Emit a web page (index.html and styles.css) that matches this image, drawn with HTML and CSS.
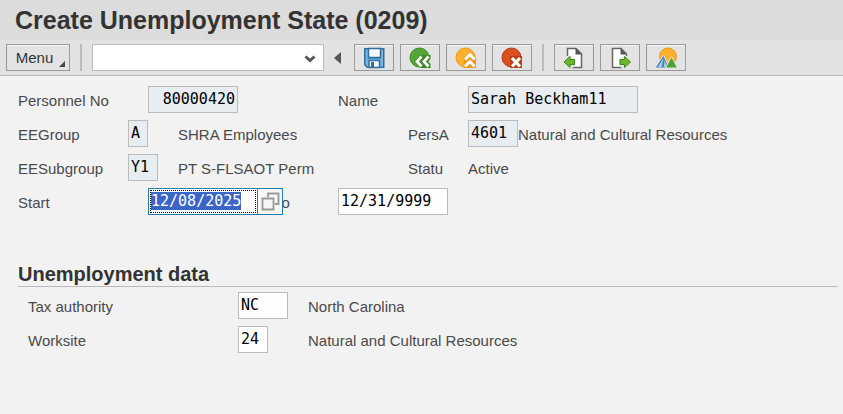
FILE: index.html
```html
<!DOCTYPE html>
<html lang="en">
<head>
	<meta charset="UTF-8">
	<title>Create Unemployment State (0209)</title>
	<link rel="stylesheet" href="styles.css">
	<script src="main.js" defer></script>
</head>
<body>
	<header class="titlebar">
		<h1>Create Unemployment State (0209)</h1>
	</header>
	<div class="toolbar">
		<button type="button" class="btn menu">Menu<span class="corner"></span></button>
		<span class="sep"></span>
		<div class="command">
			<select aria-label="Command"><option></option></select>
			<svg viewBox="0 0 12 8" width="12" height="8"><path d="M1.500 1.500L6 5.500L10.500 1.500" fill="none" stroke="#555" stroke-width="3"/></svg>
		</div>
		<button type="button" class="collapse" aria-label="Hide command field">
			<svg viewBox="0 0 7 12" width="7" height="12"><path d="M7 0V12L0 6z" fill="#555"/></svg>
		</button>
		<div class="group">
			<button type="button" class="btn icon" aria-label="Save">
				<svg viewBox="0 0 22 22" width="22" height="22">
					<path d="M1 1H21.500V21H4L1 18z" fill="#2e6f9f"/>
					<path d="M2.500 2.500H5V11.500H18V2.500H20V19.500H4.500L2.500 17.500z" fill="#7db3dc"/>
					<path d="M5.500 1.500H17.500V10.500H5.500z" fill="#f4f8fb" stroke="#2e6f9f" stroke-width="1.500"/>
					<path d="M6 13.500H16.500V20.500H6z" fill="#f4f8fb" stroke="#2e6f9f" stroke-width="1.500"/>
					<path d="M8 15H11V20H8z" fill="#2e6f9f"/>
				</svg>
			</button>
			<button type="button" class="btn icon" aria-label="Back">
				<svg viewBox="0 0 22 22" width="22" height="22">
					<circle cx="10.500" cy="10.500" r="9.500" fill="#55a636" stroke="#3d8a24"/>
					<path d="M11 8H21.500V12L19 14.500L21.500 17V21H11L5 14.500z" fill="#3d8a24"/>
					<path d="M12.500 9.500L8 14.500L12.500 19.500M19.500 9.500L15 14.500L19.500 19.500" fill="none" stroke="#fff" stroke-width="2.800"/>
				</svg>
			</button>
			<button type="button" class="btn icon" aria-label="Exit">
				<svg viewBox="0 0 22 22" width="22" height="22">
					<circle cx="10.500" cy="10.500" r="9.500" fill="#fdb02c" stroke="#f09a1c"/>
					<path d="M8.500 11L14.500 5L21 11V21H8.500z" fill="#f09a1c"/>
					<path d="M10 12.500L14.800 7.500L19.600 12.500M10 19.500L14.800 14.500L19.600 19.500" fill="none" stroke="#fff" stroke-width="2.800"/>
				</svg>
			</button>
			<button type="button" class="btn icon" aria-label="Cancel">
				<svg viewBox="0 0 22 22" width="22" height="22">
					<circle cx="10.500" cy="10.500" r="9.500" fill="#d9501f" stroke="#bd3c14"/>
					<path d="M9 9H21V21H9z" fill="#bd3c14"/>
					<path d="M11 11L19 19.500M19 11L11 19.500" stroke="#fff" stroke-width="3.200"/>
				</svg>
			</button>
		</div>
		<span class="sep"></span>
		<div class="group">
			<button type="button" class="btn icon" aria-label="Previous record">
				<svg viewBox="0 0 22 22" width="22" height="22">
					<path d="M4.500 1.500H13L18.500 7V20.500H4.500z" fill="#fff" stroke="#666" stroke-width="1.500"/>
					<path d="M12.500 1V7.500H19z" fill="#555"/>
					<path d="M0 9H7L12.500 12V18.500L8 22H0z" fill="#e3e3e3"/>
					<path d="M1 15L7 9.500V12.500H11.500V17.500H7V20.500z" fill="#6cb52d" stroke="#3f8a1c"/>
				</svg>
			</button>
			<button type="button" class="btn icon" aria-label="Next record">
				<svg viewBox="0 0 22 22" width="22" height="22">
					<path d="M3.500 1.500H12L17.500 7V20.500H3.500z" fill="#fff" stroke="#666" stroke-width="1.500"/>
					<path d="M11.500 1V7.500H18z" fill="#555"/>
					<path d="M22 9H15L10 12V18.500L14 22H22z" fill="#e3e3e3"/>
					<path d="M21.500 15L15.500 9.500V12.500H11V17.500H15.500V20.500z" fill="#6cb52d" stroke="#3f8a1c"/>
				</svg>
			</button>
			<button type="button" class="btn icon" aria-label="Overview">
				<svg viewBox="0 0 22 22" width="22" height="22">
					<circle cx="13" cy="9.500" r="8.500" fill="#fdb02c" stroke="#f09a1c"/>
					<path d="M0 21L8.500 8L14.500 21z" fill="#4586b8" stroke="#e3e3e3"/>
					<path d="M3 20L8.500 11L6.500 20z" fill="#a9cdea"/>
					<path d="M9 20L9.500 13L12 20z" fill="#a9cdea"/>
					<path d="M10.500 21L16.500 9.500L22.500 21z" fill="#4ba32f" stroke="#e3e3e3"/>
				</svg>
			</button>
		</div>
	</div>

	<form class="content">
		<div class="header-data">
			<label class="c-label" for="pernr">Personnel No</label>
			<input class="field w90 num c-start" id="pernr" value="80000420" readonly>
			<label class="c-mid" for="name">Name</label>
			<input class="field w170 c-value" id="name" value="Sarah Beckham11" readonly>

			<label class="c-label" for="eegroup">EEGroup</label>
			<input class="field w20 c-code" id="eegroup" value="A" readonly>
			<span class="c-text">SHRA Employees</span>
			<label class="c-right" for="persa">PersA</label>
			<div class="c-value pair">
				<input class="field w50" id="persa" value="4601" readonly>
				<span>Natural and Cultural Resources</span>
			</div>

			<label class="c-label" for="eesub">EESubgroup</label>
			<input class="field w30 c-code" id="eesub" value="Y1" readonly>
			<span class="c-text">PT S-FLSAOT Perm</span>
			<span class="c-right">Statu</span>
			<span class="c-value">Active</span>

			<label class="c-label" for="start">Start</label>
			<div class="c-start date">
				<input class="field w110" id="start" value="12/08/2025">
				<button type="button" class="help" aria-label="Choose date">
					<svg viewBox="0 0 19 19" width="19" height="19"><path d="M7 5V1.500H17.500V12H14M1.500 6.500H12.500V17.500H1.500z" fill="none" stroke="#999" stroke-width="1.800"/></svg>
				</button>
			</div>
			<label class="c-to" for="end">To</label>
			<input class="field w110 c-mid" id="end" value="12/31/9999">
		</div>

		<section>
			<h2>Unemployment data</h2>
			<div class="unemployment">
				<label for="tax">Tax authority</label>
				<input class="field w50" id="tax" value="NC">
				<span>North Carolina</span>
				<label for="worksite">Worksite</label>
				<input class="field w30" id="worksite" value="24">
				<span>Natural and Cultural Resources</span>
			</div>
		</section>
	</form>
</body>
</html>
```
FILE: styles.css
```css
*{
	box-sizing: border-box;
	margin: 0;
	padding: 0;
}
body{
	background: #f2f2f2;
	color: #4a4a4a;
	font: 15px/20px "Liberation Sans", Arial, sans-serif;
}
h1,h2{
	color: #333;
	font-weight: bold;
}
.titlebar{
	background: #dcdcdc;
	padding: 5px 15px;
}
h1{
	font-size: 25px;
	line-height: 30px;
}
/* toolbar */
.toolbar{
	display: flex;
	align-items: center;
	padding: 4px 6px;
	background: #e2e2e2;
	border-bottom: 1px solid #bbb;
}
.btn{
	height: 27px;
	background: #e3e3e3;
	border: 1px solid #999;
	box-shadow: inset 0 1px #f6f6f6;
}
.menu{
	position: relative;
	width: 64px;
	padding-right: 7px;
	color: #333;
	font: inherit;
}
.corner{
	position: absolute;
	right: 4px;
	bottom: 3px;
	border-left: 6px solid transparent;
	border-bottom: 6px solid #444;
}
.sep{
	width: 2px;
	height: 27px;
	margin: 0 10px;
	background: #bbb;
}
.command{
	position: relative;
	width: 232px;
}
.command select{
	display: block;
	width: 100%;
	height: 27px;
	appearance: none;
	background: #fff;
	border: 1px solid #bbb;
}
.command svg{
	position: absolute;
	right: 8px;
	top: 11px;
	pointer-events: none;
}
.collapse{
	display: flex;
	margin: 0 13px 0 10px;
	background: none;
	border: 0;
}
.group{
	display: flex;
	gap: 6px;
}
.icon{
	display: flex;
	align-items: center;
	justify-content: center;
	width: 40px;
}
/* form */
.content{
	padding: 10px 5px 10px 18px;
}
.content label,.content span{
	padding-top: 2px;
}
.field{
	display: block;
	height: 27px;
	padding: 0 2px 2px;
	background: #fff;
	border: 1px solid #bbb;
	border-radius: 0;
	color: #000;
	font: 15px/16px "DejaVu Sans Mono", monospace;
}
.field[readonly]{
	background: #e8edf1;
}
.num{
	text-align: right;
}
.w20{ width: 20px; }
.w30{ width: 30px; }
.w50{ width: 50px; }
.w90{ width: 90px; }
.w110{ width: 110px; }
.w170{ width: 170px; }
.header-data{
	display: grid;
	grid-template-columns: 110px 20px 30px 96px 64px 70px 60px 1fr;
	grid-auto-rows: 27px;
	row-gap: 7px;
	align-items: center;
	white-space: nowrap;
}
.c-label{ grid-column: 1; }
.c-code{ grid-column: 2; }
.c-start{ grid-column: 3; }
.c-text{ grid-column: 4; }
.c-to{ grid-column: 5; }
.c-mid{ grid-column: 6; }
.c-right{ grid-column: 7; }
.c-value{ grid-column: 8; }
.pair{
	display: flex;
	align-items: center;
}
.date{
	position: relative;
}
.field:focus{
	border-color: #1f7fb0;
	outline: 1px dotted #000;
	outline-offset: -3px;
}
.field::selection{
	background: #3b66c8;
	color: #fff;
}
/* value help button, lies over the "To" label */
.help{
	position: absolute;
	left: 109px;
	top: 0;
	display: flex;
	align-items: center;
	justify-content: center;
	width: 26px;
	height: 27px;
	background: #f6f6f6;
	border: 1px solid #1f7fb0;
}
section{
	padding-top: 47px;
}
h2{
	font-size: 20px;
	line-height: 24px;
	border-bottom: 1px solid #bbb;
}
.unemployment{
	display: grid;
	grid-template-columns: 210px 70px 1fr;
	grid-auto-rows: 27px;
	row-gap: 7px;
	align-items: center;
	padding: 5px 10px;
}
```
FILE: main.js
```js
var start = document.getElementById('start');
start.focus();
start.select();
```
